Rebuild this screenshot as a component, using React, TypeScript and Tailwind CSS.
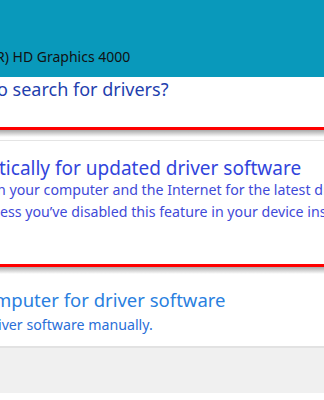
import React from "react";

export default function App() {
  const font = { fontFamily: '"Noto Sans", "Open Sans", sans-serif' };
  return (
    <div className="w-[324px] h-[400px] overflow-hidden bg-white flex flex-col" style={font}>
      <div className="h-[77px] bg-[#0999bb] flex items-end pb-[11px] overflow-hidden">
        <span className="ml-[-4px] text-[14px] leading-[18px] text-[#111] whitespace-nowrap">R) HD Graphics 4000</span>
      </div>
      <div className="h-[50px] overflow-hidden">
        <div className="ml-[-3px] mt-[0px] text-[18px] leading-[24px] text-[#1f3fae] whitespace-nowrap">o search for drivers?</div>
      </div>
      <div className="h-[3px] bg-[#ff0000]" />
      <div className="h-[7px] bg-gradient-to-b from-[#a9a9a9] to-white" />
      <div className="h-[3px]" />
      <div className="h-[1px] bg-[#e4e4e4]" />
      <div className="h-[123px] overflow-hidden pt-[15px]">
        <div className="ml-[-1px] text-[19px] leading-[24px] text-[#3245dc] whitespace-nowrap">tically for updated driver software</div>
        <div className="ml-[-3px] mt-[-1px] text-[14.2px] leading-[22px] text-[#3f4ad8] whitespace-nowrap">n your computer and the Internet for the latest driver</div>
        <div className="ml-[0px] text-[14.2px] leading-[22px] text-[#3f4ad8] whitespace-nowrap">ess you’ve disabled this feature in your device installation</div>
      </div>
      <div className="h-[3px] bg-[#ff0000]" />
      <div className="h-[7px] bg-gradient-to-b from-[#a9a9a9] to-white" />
      <div className="h-[72px] overflow-hidden pt-[14px]">
        <div className="ml-[-6px] text-[18.5px] leading-[24px] text-[#2a7fe0] whitespace-nowrap">mputer for driver software</div>
        <div className="ml-[-2px] mt-[2px] text-[14.2px] leading-[22px] text-[#2a6fd8] whitespace-nowrap">iver software manually.</div>
      </div>
      <div className="h-[2px] bg-[#e2e2e2]" />
      <div className="h-[45px] bg-[#f0f0f0]" />
      <div className="flex-1 bg-white" />
    </div>
  );
}
